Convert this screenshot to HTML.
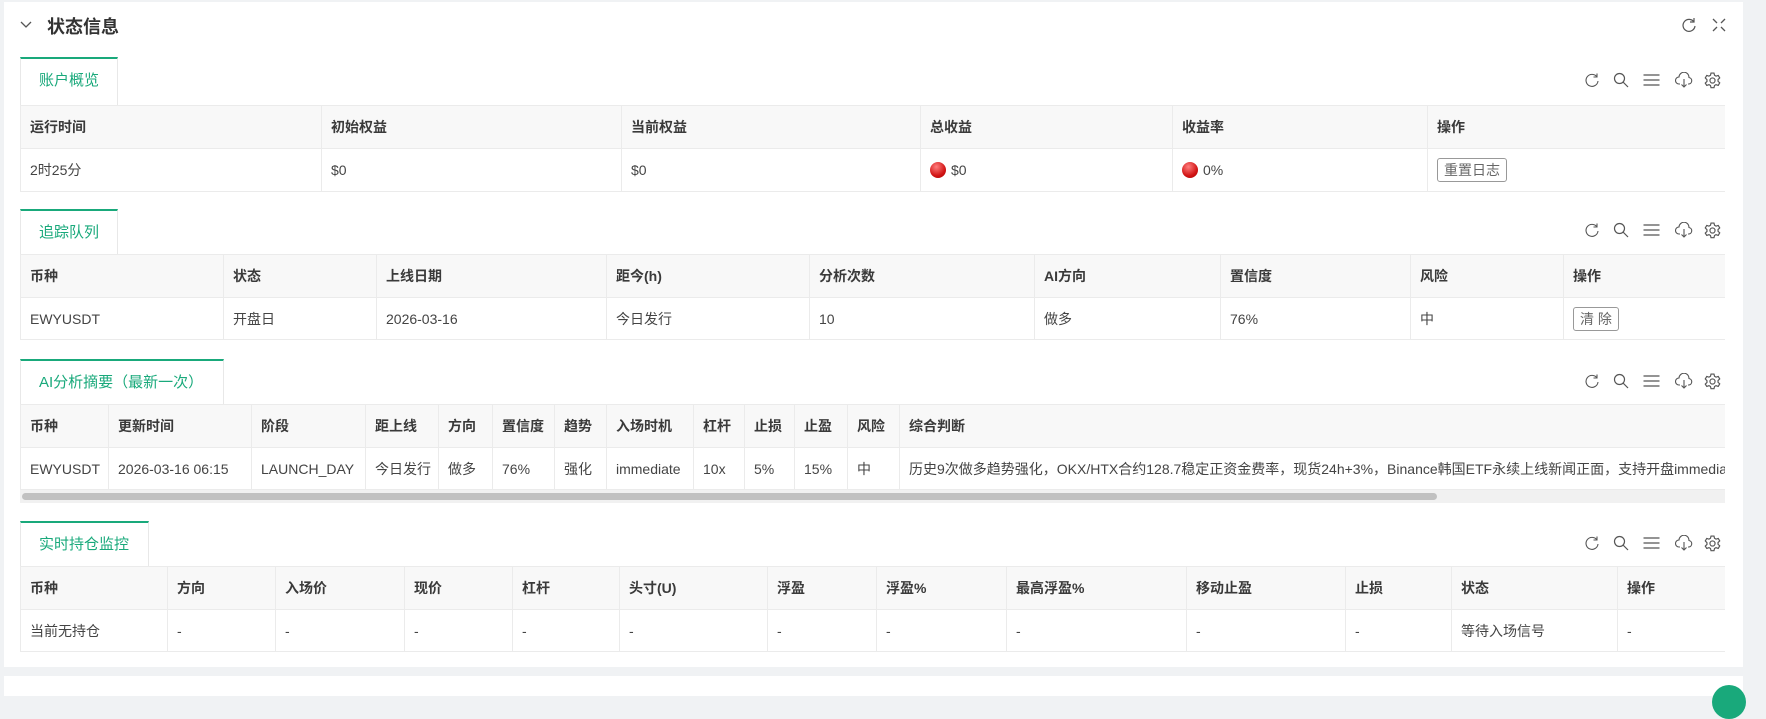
<!DOCTYPE html>
<html><head><meta charset="utf-8"><style>
*{box-sizing:border-box;margin:0;padding:0}
body{width:1766px;height:690px;background:#f0f2f4;font-family:"Liberation Sans","Noto Sans CJK SC",sans-serif;font-size:14px;color:#444;position:relative;overflow:hidden}
.panel{position:absolute;background:#fff}
.title{position:absolute;left:47px;top:13px;font-size:18px;font-weight:bold;color:#333}
.tab{position:absolute;left:20px;height:48px;border:1px solid #e8e8e8;border-top:2px solid #19a97b;border-bottom:none;color:#19a97b;font-size:15px;padding-left:18px;line-height:44px;background:#fff}
.icons{position:absolute;left:1582px;width:150px;height:22px}
.icons svg{position:absolute;top:0}
.tw{position:absolute;left:20px;width:1705px;overflow:hidden}
table{border-collapse:collapse;table-layout:fixed}
td,th{border:1px solid #ebebeb;padding:0 9px;text-align:left;white-space:nowrap;overflow:hidden}
th{background:#f8f8f8;font-weight:bold;color:#3a3a3a;height:43px}
td{height:42px;color:#444}
.btn{display:inline-block;border:1px solid #999;border-radius:3px;padding:0 6px;line-height:22px;color:#666;font-size:14px}
.dot{display:inline-block;width:16px;height:16px;border-radius:50%;background:radial-gradient(circle at 40% 30%,#ff7d7d,#d21616 60%,#a00);vertical-align:-3px;margin-right:5px}
</style></head><body>
<div class="panel" style="left:4px;top:2px;width:1739px;height:665px"></div>
<div class="panel" style="left:4px;top:676px;width:1739px;height:20px"></div>
<div style="position:absolute;left:1712px;top:685px;width:34px;height:34px;border-radius:50%;background:#19a97b"></div>
<svg style="position:absolute;left:20px;top:20px" width="12" height="10"><path d="M1 2 L6 7 L11 2" fill="none" stroke="#555" stroke-width="1.3"/></svg>
<div class="title">状态信息</div>
<svg style="position:absolute;left:1681px;top:17px" width="16" height="16" viewBox="0 0 16 16"><path d="M13 5A6 6 0 1 0 14 9" fill="none" stroke="#555" stroke-width="1.2"/><path d="M13 1V5H9" fill="none" stroke="#555" stroke-width="1.2"/></svg>
<svg style="position:absolute;left:1712px;top:18px" width="14" height="14" viewBox="0 0 14 14" stroke="#555" stroke-width="1.3" fill="none"><path d="M1 1L5 5M13 1L9 5M1 13L5 9M13 13L9 9"/></svg>

<div id="ic"></div>

<div class="tab" style="top:57px;width:98px">账户概览</div>
<div class="tw" style="top:105px"><table style="width:1705px">
<colgroup><col style="width:301px"><col style="width:300px"><col style="width:299px"><col style="width:252px"><col style="width:255px"><col style="width:298px"></colgroup>
<tr><th>运行时间</th><th>初始权益</th><th>当前权益</th><th>总收益</th><th>收益率</th><th>操作</th></tr>
<tr><td style="height:43px">2时25分</td><td>$0</td><td>$0</td><td><span class="dot"></span>$0</td><td><span class="dot"></span>0%</td><td><span class="btn">重置日志</span></td></tr>
</table></div>

<div class="tab" style="top:209px;width:98px">追踪队列</div>
<div class="tw" style="top:254px"><table style="width:1705px">
<colgroup><col style="width:203px"><col style="width:153px"><col style="width:230px"><col style="width:203px"><col style="width:225px"><col style="width:186px"><col style="width:190px"><col style="width:153px"><col style="width:162px"></colgroup>
<tr><th>币种</th><th>状态</th><th>上线日期</th><th>距今(h)</th><th>分析次数</th><th>AI方向</th><th>置信度</th><th>风险</th><th>操作</th></tr>
<tr><td>EWYUSDT</td><td>开盘日</td><td>2026-03-16</td><td>今日发行</td><td>10</td><td>做多</td><td>76%</td><td>中</td><td><span class="btn">清 除</span></td></tr>
</table></div>

<div class="tab" style="top:359px;width:204px">AI分析摘要（最新一次）</div>
<div class="tw" style="top:404px"><table style="width:2000px">
<colgroup><col style="width:88px"><col style="width:143px"><col style="width:114px"><col style="width:73px"><col style="width:54px"><col style="width:62px"><col style="width:52px"><col style="width:87px"><col style="width:51px"><col style="width:50px"><col style="width:53px"><col style="width:52px"><col style="width:1121px"></colgroup>
<tr><th>币种</th><th>更新时间</th><th>阶段</th><th>距上线</th><th>方向</th><th>置信度</th><th>趋势</th><th>入场时机</th><th>杠杆</th><th>止损</th><th>止盈</th><th>风险</th><th>综合判断</th></tr>
<tr><td>EWYUSDT</td><td>2026-03-16 06:15</td><td>LAUNCH_DAY</td><td>今日发行</td><td>做多</td><td>76%</td><td>强化</td><td>immediate</td><td>10x</td><td>5%</td><td>15%</td><td>中</td><td>历史9次做多趋势强化，OKX/HTX合约128.7稳定正资金费率，现货24h+3%，Binance韩国ETF永续上线新闻正面，支持开盘immediate入场</td></tr>
</table>
<div style="height:13px;background:#f1f1f1;position:relative"><div style="position:absolute;left:2px;top:3px;width:1415px;height:7px;border-radius:4px;background:#c1c1c1"></div></div>
</div>

<div class="tab" style="top:521px;width:129px">实时持仓监控</div>
<div class="tw" style="top:566px"><table style="width:1705px">
<colgroup><col style="width:147px"><col style="width:108px"><col style="width:129px"><col style="width:108px"><col style="width:107px"><col style="width:148px"><col style="width:109px"><col style="width:130px"><col style="width:180px"><col style="width:159px"><col style="width:106px"><col style="width:166px"><col style="width:108px"></colgroup>
<tr><th>币种</th><th>方向</th><th>入场价</th><th>现价</th><th>杠杆</th><th>头寸(U)</th><th>浮盈</th><th>浮盈%</th><th>最高浮盈%</th><th>移动止盈</th><th>止损</th><th>状态</th><th>操作</th></tr>
<tr><td>当前无持仓</td><td>-</td><td>-</td><td>-</td><td>-</td><td>-</td><td>-</td><td>-</td><td>-</td><td>-</td><td>-</td><td>等待入场信号</td><td>-</td></tr>
</table></div>

<script>
var tops=[72,222,373,535],h='';
var svgs='<svg style="left:2px" width="16" height="16" viewBox="0 0 16 16"><path d="M13 5A6 6 0 1 0 14 9" fill="none" stroke="#555" stroke-width="1.1"/><path d="M13 1.5V5H9.5" fill="none" stroke="#555" stroke-width="1.1"/></svg>'+
'<svg style="left:31px" width="16" height="16" viewBox="0 0 16 16" fill="none" stroke="#555" stroke-width="1.2"><circle cx="6.5" cy="6.5" r="5"/><path d="M10 10L15 15"/></svg>'+
'<svg style="left:61px" width="17" height="16" viewBox="0 0 16 16" stroke="#555" stroke-width="1.2"><path d="M0 3H16M0 8H16M0 13H16"/></svg>'+
'<svg style="left:93px" width="18" height="16" viewBox="0 0 18 16" fill="none" stroke="#555" stroke-width="1.1"><path d="M5 12H4A3.5 3.5 0 0 1 4 5A5 5 0 0 1 14 5.5A3.3 3.3 0 0 1 14 12H13"/><path d="M9 7V15M6.5 12.5L9 15L11.5 12.5"/></svg>'+
'<svg style="left:122px" width="17" height="17" viewBox="0 0 16 16" fill="none" stroke="#555" stroke-width="1.1"><path d="M6.6 1h2.8l.5 2.1 1.4.8 2.1-.7 1.4 2.4-1.6 1.5v1.6l1.6 1.5-1.4 2.4-2.1-.7-1.4.8-.5 2.1H6.6l-.5-2.1-1.4-.8-2.1.7L1.2 10.4l1.6-1.5V7.3L1.2 5.6 2.6 3.2l2.1.7 1.4-.8z"/><circle cx="8" cy="8" r="2.4"/></svg>';
tops.forEach(function(t){h+='<div class="icons" style="top:'+t+'px">'+svgs+'</div>'});
document.getElementById('ic').innerHTML=h;
</script>
</body></html>
